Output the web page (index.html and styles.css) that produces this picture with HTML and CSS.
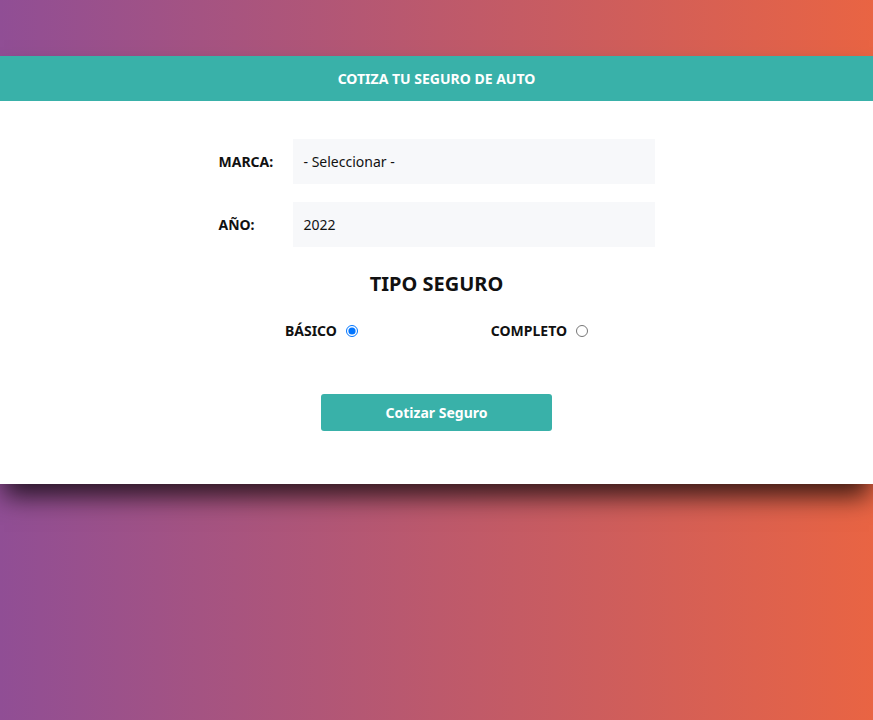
FILE: index.html
```html
<!DOCTYPE html>
<html lang="es">
<head>
<meta charset="utf-8">
<title>Cotizador</title>
<link rel="stylesheet" href="styles.css">
</head>
<body>
<div class="page">
  <div class="card">
    <header class="card-header">COTIZA TU SEGURO DE AUTO</header>
    <form class="form">
      <div class="field">
        <label class="label">MARCA:</label>
        <div class="control">- Seleccionar -</div>
      </div>
      <div class="field">
        <label class="label">AÑO:</label>
        <div class="control">2022</div>
      </div>
      <h2 class="title">TIPO SEGURO</h2>
      <div class="radios">
        <label class="radio">BÁSICO <input type="radio" name="plan" checked></label>
        <label class="radio">COMPLETO <input type="radio" name="plan"></label>
      </div>
      <div class="actions">
        <button type="button" class="btn">Cotizar Seguro</button>
      </div>
    </form>
  </div>
</div>
</body>
</html>
```
FILE: styles.css
```css
html, body {
  margin: 0;
  min-height: 100%;
}
html {
  height: 100%;
}
body {
  background: linear-gradient(to right, #904e95, #e96443);
  font-family: "Noto Sans", "Open Sans", sans-serif;
  color: #111;
}
.page {
  padding-top: 56px;
}
.card {
  background: #fff;
  box-shadow: 0 16px 24px -4px rgba(0, 0, 0, 0.75);
  padding-bottom: 53px;
}
.card-header {
  background: #39b1a9;
  color: #fff;
  font-weight: 700;
  font-size: 14px;
  height: 45px;
  display: flex;
  align-items: center;
  justify-content: center;
}
.form {
  width: 436px;
  margin: 38px auto 0;
}
.field {
  display: flex;
  align-items: center;
  margin-bottom: 18px;
}
.label {
  width: 74px;
  font-weight: 700;
  font-size: 14px;
}
.control {
  flex: 1;
  height: 45px;
  background: #f7f8fa;
  display: flex;
  align-items: center;
  padding-left: 11px;
  font-size: 14px;
}
.title {
  margin: 23px 0 0;
  text-align: center;
  font-size: 20px;
  line-height: 28px;
}
.radios {
  display: flex;
  justify-content: space-around;
  margin-top: 23px;
}
.radio {
  display: flex;
  align-items: center;
  font-weight: 700;
  font-size: 14px;
  gap: 9px;
}
.radio input {
  margin: 0;
  width: 12px;
  height: 12px;
}
.actions {
  display: flex;
  justify-content: center;
  margin-top: 54px;
}
.btn {
  width: 231px;
  height: 37px;
  border: none;
  border-radius: 3px;
  background: #39b1a9;
  color: #fff;
  font-family: inherit;
  font-weight: 700;
  font-size: 14px;
}
```
